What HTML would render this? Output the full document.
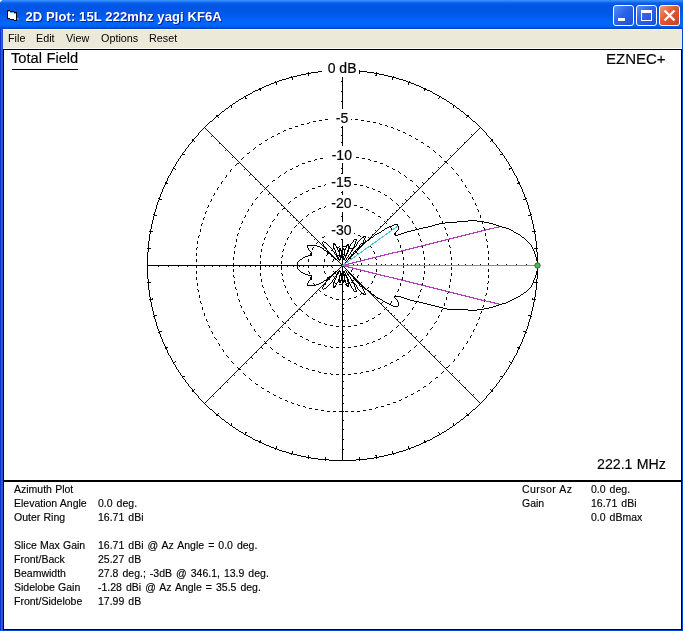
<!DOCTYPE html>
<html><head><meta charset="utf-8">
<style>
*{margin:0;padding:0;box-sizing:border-box}
html,body{width:683px;height:631px;overflow:hidden;background:#0842D6;font-family:"Liberation Sans",sans-serif;-webkit-font-smoothing:antialiased}
#panel,.t,#menu,#title,#plot{will-change:transform}
#title{position:absolute;left:0;top:0;width:683px;height:29px;
background:linear-gradient(to bottom,#3A93FF 0px,#2D86FB 1px,#0A5EEC 3px,#0054E3 6px,#0058E8 14px,#0062F8 20px,#0066FF 25px,#0058EC 27px,#003DBC 29px)}
#ttext{position:absolute;left:25.5px;top:8.5px;letter-spacing:0.1px;color:#fff;font-weight:bold;font-size:13px;line-height:16px;white-space:nowrap;text-shadow:1px 1px 0 #0A1EA0}
.btn{position:absolute;top:5px;width:21px;height:21px;border:1px solid #fff;border-radius:3px;
background:linear-gradient(135deg,#5A8EF5 0%,#2B64E6 45%,#1E51D4 100%)}
#bclose{background:linear-gradient(135deg,#F39A7C 0%,#E3592F 45%,#C8401E 100%)}
#menu{position:absolute;left:3px;top:29px;width:679px;height:20px;background:#ECE9D8;border-top:1px solid #F4F7FB;border-left:1px solid #DCE8F8;border-bottom:1px solid #FAFAF6}
#menu span{position:absolute;top:2px;font-size:10.8px;line-height:13px;color:#000}
#client{position:absolute;left:3px;top:49px;width:679px;height:581px;background:#fff;border:1px solid #000}
#lframe{position:absolute;left:0;top:29px;width:3px;height:602px;background:linear-gradient(to right,#0634CC 0,#0634CC 1px,#2C60E4 1px,#2C60E4 2px,#2452C4 2px)}
.t{position:absolute;font-size:10.5px;line-height:13px;color:#000;white-space:nowrap;word-spacing:0.3px;-webkit-text-stroke:0.15px #000}
.v{word-spacing:1.1px}
</style></head><body>
<div id="title">
  <svg style="position:absolute;left:0;top:0" width="24" height="24" shape-rendering="crispEdges"><rect x="7" y="10" width="1" height="1" fill="#000"/><rect x="8" y="10" width="1" height="1" fill="#000"/><rect x="9" y="10" width="1" height="1" fill="#000"/><rect x="7" y="11" width="1" height="1" fill="#000"/><rect x="8" y="11" width="1" height="1" fill="#55CCE2"/><rect x="9" y="11" width="1" height="1" fill="#55CCE2"/><rect x="10" y="11" width="1" height="1" fill="#000"/><rect x="11" y="11" width="1" height="1" fill="#000"/><rect x="12" y="11" width="1" height="1" fill="#000"/><rect x="13" y="11" width="1" height="1" fill="#000"/><rect x="7" y="12" width="1" height="1" fill="#000"/><rect x="8" y="12" width="1" height="1" fill="#FFFFFF"/><rect x="9" y="12" width="1" height="1" fill="#FFFFFF"/><rect x="10" y="12" width="1" height="1" fill="#55CCE2"/><rect x="11" y="12" width="1" height="1" fill="#55CCE2"/><rect x="12" y="12" width="1" height="1" fill="#55CCE2"/><rect x="13" y="12" width="1" height="1" fill="#55CCE2"/><rect x="14" y="12" width="1" height="1" fill="#000"/><rect x="15" y="12" width="1" height="1" fill="#000"/><rect x="16" y="12" width="1" height="1" fill="#000"/><rect x="7" y="13" width="1" height="1" fill="#000"/><rect x="8" y="13" width="1" height="1" fill="#FFFFFF"/><rect x="9" y="13" width="1" height="1" fill="#FFFFFF"/><rect x="10" y="13" width="1" height="1" fill="#FFFFFF"/><rect x="11" y="13" width="1" height="1" fill="#FFFFFF"/><rect x="12" y="13" width="1" height="1" fill="#FFFFFF"/><rect x="13" y="13" width="1" height="1" fill="#FFFFFF"/><rect x="14" y="13" width="1" height="1" fill="#55CCE2"/><rect x="15" y="13" width="1" height="1" fill="#55CCE2"/><rect x="16" y="13" width="1" height="1" fill="#000"/><rect x="7" y="14" width="1" height="1" fill="#000"/><rect x="8" y="14" width="1" height="1" fill="#FFFFFF"/><rect x="9" y="14" width="1" height="1" fill="#FFFFFF"/><rect x="10" y="14" width="1" height="1" fill="#FFFFFF"/><rect x="11" y="14" width="1" height="1" fill="#FFFFFF"/><rect x="12" y="14" width="1" height="1" fill="#FFFFFF"/><rect x="13" y="14" width="1" height="1" fill="#FFFFFF"/><rect x="14" y="14" width="1" height="1" fill="#FFFFFF"/><rect x="15" y="14" width="1" height="1" fill="#FFFFFF"/><rect x="16" y="14" width="1" height="1" fill="#000"/><rect x="7" y="15" width="1" height="1" fill="#000"/><rect x="8" y="15" width="1" height="1" fill="#FFFFFF"/><rect x="9" y="15" width="1" height="1" fill="#FFFFFF"/><rect x="10" y="15" width="1" height="1" fill="#FFFFFF"/><rect x="11" y="15" width="1" height="1" fill="#FFFFFF"/><rect x="12" y="15" width="1" height="1" fill="#FFFFFF"/><rect x="13" y="15" width="1" height="1" fill="#FFFFFF"/><rect x="14" y="15" width="1" height="1" fill="#FFFFFF"/><rect x="15" y="15" width="1" height="1" fill="#FFFFFF"/><rect x="16" y="15" width="1" height="1" fill="#000"/><rect x="7" y="16" width="1" height="1" fill="#000"/><rect x="8" y="16" width="1" height="1" fill="#FFFFFF"/><rect x="9" y="16" width="1" height="1" fill="#FFFFFF"/><rect x="10" y="16" width="1" height="1" fill="#FFFFFF"/><rect x="11" y="16" width="1" height="1" fill="#FFFFFF"/><rect x="12" y="16" width="1" height="1" fill="#FFFFFF"/><rect x="13" y="16" width="1" height="1" fill="#FFFFFF"/><rect x="14" y="16" width="1" height="1" fill="#FFFFFF"/><rect x="15" y="16" width="1" height="1" fill="#FFFFFF"/><rect x="16" y="16" width="1" height="1" fill="#000"/><rect x="7" y="17" width="1" height="1" fill="#000"/><rect x="8" y="17" width="1" height="1" fill="#FFFFFF"/><rect x="9" y="17" width="1" height="1" fill="#FFFFFF"/><rect x="10" y="17" width="1" height="1" fill="#FFFFFF"/><rect x="11" y="17" width="1" height="1" fill="#FFFFFF"/><rect x="12" y="17" width="1" height="1" fill="#FFFFFF"/><rect x="13" y="17" width="1" height="1" fill="#FFFFFF"/><rect x="14" y="17" width="1" height="1" fill="#FFFFFF"/><rect x="15" y="17" width="1" height="1" fill="#FFFFFF"/><rect x="16" y="17" width="1" height="1" fill="#000"/><rect x="7" y="18" width="1" height="1" fill="#000"/><rect x="8" y="18" width="1" height="1" fill="#000"/><rect x="9" y="18" width="1" height="1" fill="#000"/><rect x="10" y="18" width="1" height="1" fill="#FFFFFF"/><rect x="11" y="18" width="1" height="1" fill="#FFFFFF"/><rect x="12" y="18" width="1" height="1" fill="#FFFFFF"/><rect x="13" y="18" width="1" height="1" fill="#FFFFFF"/><rect x="14" y="18" width="1" height="1" fill="#FFFFFF"/><rect x="15" y="18" width="1" height="1" fill="#FFFFFF"/><rect x="16" y="18" width="1" height="1" fill="#000"/><rect x="10" y="19" width="1" height="1" fill="#000"/><rect x="11" y="19" width="1" height="1" fill="#000"/><rect x="12" y="19" width="1" height="1" fill="#000"/><rect x="13" y="19" width="1" height="1" fill="#000"/><rect x="14" y="19" width="1" height="1" fill="#FFFFFF"/><rect x="15" y="19" width="1" height="1" fill="#FFFFFF"/><rect x="16" y="19" width="1" height="1" fill="#000"/><rect x="14" y="20" width="1" height="1" fill="#000"/><rect x="15" y="20" width="1" height="1" fill="#000"/><rect x="16" y="20" width="1" height="1" fill="#000"/><rect x="17" y="18" width="2" height="2" fill="#8AA6D8" opacity="0.6"/></svg>
  <div style="position:absolute;left:0;top:0;width:2px;height:1px;background:#E6EEFA"></div><div style="position:absolute;left:0;top:1px;width:1px;height:1px;background:#C8D8F4"></div>
  <div id="ttext">2D Plot: 15L 222mhz yagi KF6A</div>
  <div class="btn" style="left:613px"><div style="position:absolute;left:4px;top:12px;width:7px;height:3px;background:#fff"></div></div>
  <div class="btn" style="left:636px"><div style="position:absolute;left:4px;top:4px;width:11px;height:11px;border:1px solid #fff;border-top-width:3px"></div></div>
  <div class="btn" id="bclose" style="left:659px">
    <svg style="position:absolute;left:0;top:0" width="19" height="19" viewBox="0 0 19 19"><path d="M4.5 4.5 L14.5 14.5 M14.5 4.5 L4.5 14.5" stroke="#fff" stroke-width="2.4"/></svg>
  </div>
</div>
<div id="menu">
  <span style="left:4px">File</span>
  <span style="left:32px">Edit</span>
  <span style="left:62px">View</span>
  <span style="left:97px">Options</span>
  <span style="left:145px">Reset</span>
</div>
<div id="lframe"></div>
<div id="client"></div>
<div class="t" style="left:11px;top:50px;font-size:14.7px;line-height:17px">Total Field</div>
<div style="position:absolute;left:12px;top:69px;width:66px;height:1px;background:#000"></div>
<div class="t" style="left:606px;top:50px;font-size:15px;line-height:17px">EZNEC+</div>
<div class="t" style="left:597px;top:456px;font-size:14.2px;line-height:17px">222.1 MHz</div>
<div style="position:absolute;left:4px;top:480px;width:677px;height:2px;background:#000"></div>
<div id="panel">
<div class="t" style="left:14px;top:483px">Azimuth Plot</div>
<div class="t" style="left:14px;top:497px">Elevation Angle</div><div class="t v" style="left:98px;top:497px">0.0 deg.</div>
<div class="t" style="left:14px;top:511px">Outer Ring</div><div class="t v" style="left:98px;top:511px">16.71 dBi</div>
<div class="t" style="left:14px;top:539px">Slice Max Gain</div><div class="t v" style="left:98px;top:539px">16.71 dBi @ Az Angle = 0.0 deg.</div>
<div class="t" style="left:14px;top:553px">Front/Back</div><div class="t v" style="left:98px;top:553px">25.27 dB</div>
<div class="t" style="left:14px;top:567px">Beamwidth</div><div class="t v" style="left:98px;top:567px">27.8 deg.; -3dB @ 346.1, 13.9 deg.</div>
<div class="t" style="left:14px;top:581px">Sidelobe Gain</div><div class="t v" style="left:98px;top:581px">-1.28 dBi @ Az Angle = 35.5 deg.</div>
<div class="t" style="left:14px;top:595px">Front/Sidelobe</div><div class="t v" style="left:98px;top:595px">17.99 dB</div>
<div class="t" style="left:522px;top:483px;letter-spacing:0.45px">Cursor Az</div><div class="t v" style="left:591px;top:483px">0.0 deg.</div>
<div class="t" style="left:522px;top:497px">Gain</div><div class="t v" style="left:591px;top:497px">16.71 dBi</div>
<div class="t v" style="left:591px;top:511px">0.0 dBmax</div>
</div>
<!-- PLOT -->
<svg id="plot" style="position:absolute;left:0;top:0" width="683" height="631" viewBox="0 0 683 631" shape-rendering="crispEdges">
<path d="M329 70h27v1h-27zM318 71h11v1h-11zM356 71h11v1h-11zM311 72h7v1h-7zM367 72h7v1h-7zM306 73h5v1h-5zM374 73h5v1h-5zM301 74h5v1h-5zM379 74h5v1h-5zM297 75h4v1h-4zM384 75h4v1h-4zM293 76h4v1h-4zM388 76h4v1h-4zM289 77h4v1h-4zM392 77h4v1h-4zM286 78h3v1h-3zM396 78h3v1h-3zM282 79h4v1h-4zM399 79h4v1h-4zM279 80h3v1h-3zM403 80h3v1h-3zM277 81h2v1h-2zM406 81h2v1h-2zM274 82h3v1h-3zM408 82h3v1h-3zM271 83h3v1h-3zM411 83h3v1h-3zM269 84h2v1h-2zM414 84h2v1h-2zM266 85h3v1h-3zM416 85h3v1h-3zM264 86h2v1h-2zM419 86h2v1h-2zM262 87h2v1h-2zM421 87h2v1h-2zM260 88h2v1h-2zM423 88h2v1h-2zM258 89h2v1h-2zM425 89h2v1h-2zM255 90h3v1h-3zM427 90h3v1h-3zM253 91h2v1h-2zM430 91h2v1h-2zM252 92h1v1h-1zM432 92h1v1h-1zM250 93h2v1h-2zM433 93h2v1h-2zM248 94h2v1h-2zM435 94h2v1h-2zM246 95h2v1h-2zM437 95h2v1h-2zM244 96h2v1h-2zM439 96h2v1h-2zM243 97h1v1h-1zM441 97h1v1h-1zM241 98h2v1h-2zM442 98h2v1h-2zM239 99h2v1h-2zM444 99h2v1h-2zM238 100h1v1h-1zM446 100h1v1h-1zM236 101h2v1h-2zM447 101h2v1h-2zM235 102h1v1h-1zM449 102h1v1h-1zM233 103h2v1h-2zM450 103h2v1h-2zM232 104h1v1h-1zM452 104h1v1h-1zM230 105h2v1h-2zM453 105h2v1h-2zM229 106h1v1h-1zM455 106h1v1h-1zM228 107h1v1h-1zM456 107h1v1h-1zM226 108h2v1h-2zM457 108h2v1h-2zM225 109h1v1h-1zM459 109h1v1h-1zM224 110h1v1h-1zM460 110h1v1h-1zM222 111h2v1h-2zM461 111h2v1h-2zM221 112h1v1h-1zM463 112h1v1h-1zM220 113h1v1h-1zM464 113h1v1h-1zM219 114h1v1h-1zM465 114h1v1h-1zM217 115h2v1h-2zM466 115h2v1h-2zM216 116h1v1h-1zM468 116h1v1h-1zM215 117h1v1h-1zM469 117h1v1h-1zM214 118h1v1h-1zM470 118h1v1h-1zM213 119h1v1h-1zM471 119h1v1h-1zM212 120h1v1h-1zM472 120h1v1h-1zM210 121h2v1h-2zM473 121h2v1h-2zM209 122h1v1h-1zM475 122h1v1h-1zM208 123h1v1h-1zM476 123h1v1h-1zM207 124h1v1h-1zM477 124h1v1h-1zM206 125h1v1h-1zM478 125h1v1h-1zM205 126h1v1h-1zM479 126h1v1h-1zM204 127h1v1h-1zM480 127h1v1h-1zM203 128h1v1h-1zM481 128h1v1h-1zM202 129h1v1h-1zM482 129h1v1h-1zM201 130h1v1h-1zM483 130h1v1h-1zM200 131h1v1h-1zM484 131h1v1h-1zM199 132h1v1h-1zM485 132h1v1h-1zM198 133h1v1h-1zM486 133h1v1h-1zM198 134h1v1h-1zM486 134h1v1h-1zM197 135h1v1h-1zM487 135h1v1h-1zM196 136h1v1h-1zM488 136h1v1h-1zM195 137h1v1h-1zM489 137h1v1h-1zM194 138h1v1h-1zM490 138h1v1h-1zM193 139h1v1h-1zM491 139h1v1h-1zM192 140h1v1h-1zM492 140h1v1h-1zM192 141h1v1h-1zM492 141h1v1h-1zM191 142h1v1h-1zM493 142h1v1h-1zM190 143h1v1h-1zM494 143h1v1h-1zM189 144h1v1h-1zM495 144h1v1h-1zM188 145h1v1h-1zM496 145h1v1h-1zM188 146h1v1h-1zM496 146h1v1h-1zM187 147h1v1h-1zM497 147h1v1h-1zM186 148h1v1h-1zM498 148h1v1h-1zM185 149h1v1h-1zM499 149h1v1h-1zM185 150h1v1h-1zM499 150h1v1h-1zM184 151h1v1h-1zM500 151h1v1h-1zM183 152h1v1h-1zM501 152h1v1h-1zM182 153h1v1h-1zM502 153h1v1h-1zM182 154h1v1h-1zM502 154h1v1h-1zM181 155h1v1h-1zM503 155h1v1h-1zM180 156h1v1h-1zM504 156h1v1h-1zM180 157h1v1h-1zM504 157h1v1h-1zM179 158h1v1h-1zM505 158h1v1h-1zM178 159h1v1h-1zM506 159h1v1h-1zM178 160h1v1h-1zM506 160h1v1h-1zM177 161h1v1h-1zM507 161h1v1h-1zM176 162h1v1h-1zM508 162h1v1h-1zM176 163h1v1h-1zM508 163h1v1h-1zM175 164h1v1h-1zM509 164h1v1h-1zM175 165h1v1h-1zM509 165h1v1h-1zM174 166h1v1h-1zM510 166h1v1h-1zM173 167h1v1h-1zM511 167h1v1h-1zM173 168h1v1h-1zM511 168h1v1h-1zM172 169h1v1h-1zM512 169h1v1h-1zM172 170h1v1h-1zM512 170h1v1h-1zM171 171h1v1h-1zM513 171h1v1h-1zM171 172h1v1h-1zM513 172h1v1h-1zM170 173h1v1h-1zM514 173h1v1h-1zM170 174h1v1h-1zM514 174h1v1h-1zM169 175h1v1h-1zM515 175h1v1h-1zM168 176h1v1h-1zM516 176h1v1h-1zM168 177h1v1h-1zM516 177h1v1h-1zM167 178h1v1h-1zM517 178h1v1h-1zM167 179h1v1h-1zM517 179h1v1h-1zM167 180h1v1h-1zM517 180h1v1h-1zM166 181h1v1h-1zM518 181h1v1h-1zM166 182h1v1h-1zM518 182h1v1h-1zM165 183h1v1h-1zM519 183h1v1h-1zM165 184h1v1h-1zM519 184h1v1h-1zM164 185h1v1h-1zM520 185h1v1h-1zM164 186h1v1h-1zM520 186h1v1h-1zM163 187h1v1h-1zM521 187h1v1h-1zM163 188h1v1h-1zM521 188h1v1h-1zM162 189h1v1h-1zM522 189h1v1h-1zM162 190h1v1h-1zM522 190h1v1h-1zM162 191h1v1h-1zM522 191h1v1h-1zM161 192h1v1h-1zM523 192h1v1h-1zM161 193h1v1h-1zM523 193h1v1h-1zM160 194h1v1h-1zM524 194h1v1h-1zM160 195h1v1h-1zM524 195h1v1h-1zM160 196h1v1h-1zM524 196h1v1h-1zM159 197h1v1h-1zM525 197h1v1h-1zM159 198h1v1h-1zM525 198h1v1h-1zM159 199h1v1h-1zM525 199h1v1h-1zM158 200h1v1h-1zM526 200h1v1h-1zM158 201h1v1h-1zM526 201h1v1h-1zM157 202h1v1h-1zM527 202h1v1h-1zM157 203h1v1h-1zM527 203h1v1h-1zM157 204h1v1h-1zM527 204h1v1h-1zM156 205h1v1h-1zM528 205h1v1h-1zM156 206h1v1h-1zM528 206h1v1h-1zM156 207h1v1h-1zM528 207h1v1h-1zM156 208h1v1h-1zM528 208h1v1h-1zM155 209h1v1h-1zM529 209h1v1h-1zM155 210h1v1h-1zM529 210h1v1h-1zM155 211h1v1h-1zM529 211h1v1h-1zM154 212h1v1h-1zM530 212h1v1h-1zM154 213h1v1h-1zM530 213h1v1h-1zM154 214h1v1h-1zM530 214h1v1h-1zM154 215h1v1h-1zM530 215h1v1h-1zM153 216h1v1h-1zM531 216h1v1h-1zM153 217h1v1h-1zM531 217h1v1h-1zM153 218h1v1h-1zM531 218h1v1h-1zM153 219h1v1h-1zM531 219h1v1h-1zM152 220h1v1h-1zM532 220h1v1h-1zM152 221h1v1h-1zM532 221h1v1h-1zM152 222h1v1h-1zM532 222h1v1h-1zM152 223h1v1h-1zM532 223h1v1h-1zM151 224h1v1h-1zM533 224h1v1h-1zM151 225h1v1h-1zM533 225h1v1h-1zM151 226h1v1h-1zM533 226h1v1h-1zM151 227h1v1h-1zM533 227h1v1h-1zM151 228h1v1h-1zM533 228h1v1h-1zM150 229h1v1h-1zM534 229h1v1h-1zM150 230h1v1h-1zM534 230h1v1h-1zM150 231h1v1h-1zM534 231h1v1h-1zM150 232h1v1h-1zM534 232h1v1h-1zM150 233h1v1h-1zM534 233h1v1h-1zM149 234h1v1h-1zM535 234h1v1h-1zM149 235h1v1h-1zM535 235h1v1h-1zM149 236h1v1h-1zM535 236h1v1h-1zM149 237h1v1h-1zM535 237h1v1h-1zM149 238h1v1h-1zM535 238h1v1h-1zM149 239h1v1h-1zM535 239h1v1h-1zM149 240h1v1h-1zM535 240h1v1h-1zM148 241h1v1h-1zM536 241h1v1h-1zM148 242h1v1h-1zM536 242h1v1h-1zM148 243h1v1h-1zM536 243h1v1h-1zM148 244h1v1h-1zM536 244h1v1h-1zM148 245h1v1h-1zM536 245h1v1h-1zM148 246h1v1h-1zM536 246h1v1h-1zM148 247h1v1h-1zM536 247h1v1h-1zM148 248h1v1h-1zM536 248h1v1h-1zM148 249h1v1h-1zM536 249h1v1h-1zM148 250h1v1h-1zM536 250h1v1h-1zM148 251h1v1h-1zM536 251h1v1h-1zM147 252h1v1h-1zM537 252h1v1h-1zM147 253h1v1h-1zM537 253h1v1h-1zM147 254h1v1h-1zM537 254h1v1h-1zM147 255h1v1h-1zM537 255h1v1h-1zM147 256h1v1h-1zM537 256h1v1h-1zM147 257h1v1h-1zM537 257h1v1h-1zM147 258h1v1h-1zM537 258h1v1h-1zM147 259h1v1h-1zM537 259h1v1h-1zM147 260h1v1h-1zM537 260h1v1h-1zM147 261h1v1h-1zM537 261h1v1h-1zM147 262h1v1h-1zM537 262h1v1h-1zM147 263h1v1h-1zM537 263h1v1h-1zM147 264h1v1h-1zM537 264h1v1h-1zM147 265h1v1h-1zM537 265h1v1h-1zM147 266h1v1h-1zM537 266h1v1h-1zM147 267h1v1h-1zM537 267h1v1h-1zM147 268h1v1h-1zM537 268h1v1h-1zM147 269h1v1h-1zM537 269h1v1h-1zM147 270h1v1h-1zM537 270h1v1h-1zM147 271h1v1h-1zM537 271h1v1h-1zM147 272h1v1h-1zM537 272h1v1h-1zM147 273h1v1h-1zM537 273h1v1h-1zM147 274h1v1h-1zM537 274h1v1h-1zM147 275h1v1h-1zM537 275h1v1h-1zM147 276h1v1h-1zM537 276h1v1h-1zM147 277h1v1h-1zM537 277h1v1h-1zM147 278h1v1h-1zM537 278h1v1h-1zM148 279h1v1h-1zM536 279h1v1h-1zM148 280h1v1h-1zM536 280h1v1h-1zM148 281h1v1h-1zM536 281h1v1h-1zM148 282h1v1h-1zM536 282h1v1h-1zM148 283h1v1h-1zM536 283h1v1h-1zM148 284h1v1h-1zM536 284h1v1h-1zM148 285h1v1h-1zM536 285h1v1h-1zM148 286h1v1h-1zM536 286h1v1h-1zM148 287h1v1h-1zM536 287h1v1h-1zM148 288h1v1h-1zM536 288h1v1h-1zM148 289h1v1h-1zM536 289h1v1h-1zM149 290h1v1h-1zM535 290h1v1h-1zM149 291h1v1h-1zM535 291h1v1h-1zM149 292h1v1h-1zM535 292h1v1h-1zM149 293h1v1h-1zM535 293h1v1h-1zM149 294h1v1h-1zM535 294h1v1h-1zM149 295h1v1h-1zM535 295h1v1h-1zM149 296h1v1h-1zM535 296h1v1h-1zM150 297h1v1h-1zM534 297h1v1h-1zM150 298h1v1h-1zM534 298h1v1h-1zM150 299h1v1h-1zM534 299h1v1h-1zM150 300h1v1h-1zM534 300h1v1h-1zM150 301h1v1h-1zM534 301h1v1h-1zM151 302h1v1h-1zM533 302h1v1h-1zM151 303h1v1h-1zM533 303h1v1h-1zM151 304h1v1h-1zM533 304h1v1h-1zM151 305h1v1h-1zM533 305h1v1h-1zM151 306h1v1h-1zM533 306h1v1h-1zM152 307h1v1h-1zM532 307h1v1h-1zM152 308h1v1h-1zM532 308h1v1h-1zM152 309h1v1h-1zM532 309h1v1h-1zM152 310h1v1h-1zM532 310h1v1h-1zM153 311h1v1h-1zM531 311h1v1h-1zM153 312h1v1h-1zM531 312h1v1h-1zM153 313h1v1h-1zM531 313h1v1h-1zM153 314h1v1h-1zM531 314h1v1h-1zM154 315h1v1h-1zM530 315h1v1h-1zM154 316h1v1h-1zM530 316h1v1h-1zM154 317h1v1h-1zM530 317h1v1h-1zM154 318h1v1h-1zM530 318h1v1h-1zM155 319h1v1h-1zM529 319h1v1h-1zM155 320h1v1h-1zM529 320h1v1h-1zM155 321h1v1h-1zM529 321h1v1h-1zM156 322h1v1h-1zM528 322h1v1h-1zM156 323h1v1h-1zM528 323h1v1h-1zM156 324h1v1h-1zM528 324h1v1h-1zM156 325h1v1h-1zM528 325h1v1h-1zM157 326h1v1h-1zM527 326h1v1h-1zM157 327h1v1h-1zM527 327h1v1h-1zM157 328h1v1h-1zM527 328h1v1h-1zM158 329h1v1h-1zM526 329h1v1h-1zM158 330h1v1h-1zM526 330h1v1h-1zM159 331h1v1h-1zM525 331h1v1h-1zM159 332h1v1h-1zM525 332h1v1h-1zM159 333h1v1h-1zM525 333h1v1h-1zM160 334h1v1h-1zM524 334h1v1h-1zM160 335h1v1h-1zM524 335h1v1h-1zM160 336h1v1h-1zM524 336h1v1h-1zM161 337h1v1h-1zM523 337h1v1h-1zM161 338h1v1h-1zM523 338h1v1h-1zM162 339h1v1h-1zM522 339h1v1h-1zM162 340h1v1h-1zM522 340h1v1h-1zM162 341h1v1h-1zM522 341h1v1h-1zM163 342h1v1h-1zM521 342h1v1h-1zM163 343h1v1h-1zM521 343h1v1h-1zM164 344h1v1h-1zM520 344h1v1h-1zM164 345h1v1h-1zM520 345h1v1h-1zM165 346h1v1h-1zM519 346h1v1h-1zM165 347h1v1h-1zM519 347h1v1h-1zM166 348h1v1h-1zM518 348h1v1h-1zM166 349h1v1h-1zM518 349h1v1h-1zM167 350h1v1h-1zM517 350h1v1h-1zM167 351h1v1h-1zM517 351h1v1h-1zM167 352h1v1h-1zM517 352h1v1h-1zM168 353h1v1h-1zM516 353h1v1h-1zM168 354h1v1h-1zM516 354h1v1h-1zM169 355h1v1h-1zM515 355h1v1h-1zM170 356h1v1h-1zM514 356h1v1h-1zM170 357h1v1h-1zM514 357h1v1h-1zM171 358h1v1h-1zM513 358h1v1h-1zM171 359h1v1h-1zM513 359h1v1h-1zM172 360h1v1h-1zM512 360h1v1h-1zM172 361h1v1h-1zM512 361h1v1h-1zM173 362h1v1h-1zM511 362h1v1h-1zM173 363h1v1h-1zM511 363h1v1h-1zM174 364h1v1h-1zM510 364h1v1h-1zM175 365h1v1h-1zM509 365h1v1h-1zM175 366h1v1h-1zM509 366h1v1h-1zM176 367h1v1h-1zM508 367h1v1h-1zM176 368h1v1h-1zM508 368h1v1h-1zM177 369h1v1h-1zM507 369h1v1h-1zM178 370h1v1h-1zM506 370h1v1h-1zM178 371h1v1h-1zM506 371h1v1h-1zM179 372h1v1h-1zM505 372h1v1h-1zM180 373h1v1h-1zM504 373h1v1h-1zM180 374h1v1h-1zM504 374h1v1h-1zM181 375h1v1h-1zM503 375h1v1h-1zM182 376h1v1h-1zM502 376h1v1h-1zM182 377h1v1h-1zM502 377h1v1h-1zM183 378h1v1h-1zM501 378h1v1h-1zM184 379h1v1h-1zM500 379h1v1h-1zM185 380h1v1h-1zM499 380h1v1h-1zM185 381h1v1h-1zM499 381h1v1h-1zM186 382h1v1h-1zM498 382h1v1h-1zM187 383h1v1h-1zM497 383h1v1h-1zM188 384h1v1h-1zM496 384h1v1h-1zM188 385h1v1h-1zM496 385h1v1h-1zM189 386h1v1h-1zM495 386h1v1h-1zM190 387h1v1h-1zM494 387h1v1h-1zM191 388h1v1h-1zM493 388h1v1h-1zM192 389h1v1h-1zM492 389h1v1h-1zM192 390h1v1h-1zM492 390h1v1h-1zM193 391h1v1h-1zM491 391h1v1h-1zM194 392h1v1h-1zM490 392h1v1h-1zM195 393h1v1h-1zM489 393h1v1h-1zM196 394h1v1h-1zM488 394h1v1h-1zM197 395h1v1h-1zM487 395h1v1h-1zM198 396h1v1h-1zM486 396h1v1h-1zM198 397h1v1h-1zM486 397h1v1h-1zM199 398h1v1h-1zM485 398h1v1h-1zM200 399h1v1h-1zM484 399h1v1h-1zM201 400h1v1h-1zM483 400h1v1h-1zM202 401h1v1h-1zM482 401h1v1h-1zM203 402h1v1h-1zM481 402h1v1h-1zM204 403h1v1h-1zM480 403h1v1h-1zM205 404h1v1h-1zM479 404h1v1h-1zM206 405h1v1h-1zM478 405h1v1h-1zM207 406h1v1h-1zM477 406h1v1h-1zM208 407h1v1h-1zM476 407h1v1h-1zM209 408h1v1h-1zM475 408h1v1h-1zM210 409h2v1h-2zM473 409h2v1h-2zM212 410h1v1h-1zM472 410h1v1h-1zM213 411h1v1h-1zM471 411h1v1h-1zM214 412h1v1h-1zM470 412h1v1h-1zM215 413h1v1h-1zM469 413h1v1h-1zM216 414h1v1h-1zM468 414h1v1h-1zM217 415h2v1h-2zM466 415h2v1h-2zM219 416h1v1h-1zM465 416h1v1h-1zM220 417h1v1h-1zM464 417h1v1h-1zM221 418h1v1h-1zM463 418h1v1h-1zM222 419h2v1h-2zM461 419h2v1h-2zM224 420h1v1h-1zM460 420h1v1h-1zM225 421h1v1h-1zM459 421h1v1h-1zM226 422h2v1h-2zM457 422h2v1h-2zM228 423h1v1h-1zM456 423h1v1h-1zM229 424h1v1h-1zM455 424h1v1h-1zM230 425h2v1h-2zM453 425h2v1h-2zM232 426h1v1h-1zM452 426h1v1h-1zM233 427h2v1h-2zM450 427h2v1h-2zM235 428h1v1h-1zM449 428h1v1h-1zM236 429h2v1h-2zM447 429h2v1h-2zM238 430h1v1h-1zM446 430h1v1h-1zM239 431h2v1h-2zM444 431h2v1h-2zM241 432h2v1h-2zM442 432h2v1h-2zM243 433h1v1h-1zM441 433h1v1h-1zM244 434h2v1h-2zM439 434h2v1h-2zM246 435h2v1h-2zM437 435h2v1h-2zM248 436h2v1h-2zM435 436h2v1h-2zM250 437h2v1h-2zM433 437h2v1h-2zM252 438h1v1h-1zM432 438h1v1h-1zM253 439h2v1h-2zM430 439h2v1h-2zM255 440h3v1h-3zM427 440h3v1h-3zM258 441h2v1h-2zM425 441h2v1h-2zM260 442h2v1h-2zM423 442h2v1h-2zM262 443h2v1h-2zM421 443h2v1h-2zM264 444h2v1h-2zM419 444h2v1h-2zM266 445h3v1h-3zM416 445h3v1h-3zM269 446h2v1h-2zM414 446h2v1h-2zM271 447h3v1h-3zM411 447h3v1h-3zM274 448h3v1h-3zM408 448h3v1h-3zM277 449h2v1h-2zM406 449h2v1h-2zM279 450h3v1h-3zM403 450h3v1h-3zM282 451h4v1h-4zM399 451h4v1h-4zM286 452h3v1h-3zM396 452h3v1h-3zM289 453h4v1h-4zM392 453h4v1h-4zM293 454h4v1h-4zM388 454h4v1h-4zM297 455h4v1h-4zM384 455h4v1h-4zM301 456h5v1h-5zM379 456h5v1h-5zM306 457h5v1h-5zM374 457h5v1h-5zM311 458h7v1h-7zM367 458h7v1h-7zM318 459h11v1h-11zM356 459h11v1h-11zM329 460h27v1h-27z" fill="#000"/>
<path d="M488 265h1v1h-1zM488 264h1v1h-1zM488 263h1v1h-1zM488 259h1v1h-1zM488 258h1v1h-1zM488 257h1v1h-1zM488 253h1v1h-1zM488 252h1v1h-1zM488 251h1v1h-1zM487 247h1v1h-1zM487 246h1v1h-1zM487 245h1v1h-1zM487 241h1v1h-1zM486 240h1v1h-1zM486 239h1v1h-1zM485 235h1v1h-1zM485 234h1v1h-1zM485 233h1v1h-1zM484 229h1v1h-1zM484 228h1v1h-1zM483 227h1v1h-1zM482 223h1v1h-1zM482 222h1v1h-1zM482 221h1v1h-1zM480 217h1v1h-1zM480 216h1v1h-1zM480 215h1v1h-1zM478 211h1v1h-1zM478 210h1v1h-1zM477 209h1v1h-1zM476 205h1v1h-1zM475 204h1v1h-1zM475 203h1v1h-1zM473 199h1v1h-1zM472 198h1v1h-1zM472 197h1v1h-1zM470 193h1v1h-1zM469 192h1v1h-1zM468 191h1v1h-1zM466 187h1v1h-1zM465 186h1v1h-1zM465 185h1v1h-1zM462 181h1v1h-1zM461 180h1v1h-1zM461 179h1v1h-1zM458 175h1v1h-1zM457 174h1v1h-1zM456 173h1v1h-1zM453 169h1v1h-1zM452 168h1v1h-1zM451 167h1v1h-1zM447 163h1v1h-1zM446 162h1v1h-1zM445 161h1v1h-1zM441 157h1v1h-1zM440 156h1v1h-1zM439 155h1v1h-1zM435 152h1v1h-1zM434 151h1v1h-1zM433 150h1v1h-1zM429 147h1v1h-1zM428 146h1v1h-1zM427 146h1v1h-1zM423 143h1v1h-1zM422 142h1v1h-1zM421 142h1v1h-1zM417 139h1v1h-1zM416 139h1v1h-1zM415 138h1v1h-1zM411 136h1v1h-1zM410 135h1v1h-1zM409 135h1v1h-1zM405 133h1v1h-1zM404 132h1v1h-1zM403 132h1v1h-1zM399 130h1v1h-1zM398 130h1v1h-1zM397 129h1v1h-1zM393 128h1v1h-1zM392 127h1v1h-1zM391 127h1v1h-1zM387 126h1v1h-1zM386 125h1v1h-1zM385 125h1v1h-1zM381 124h1v1h-1zM380 124h1v1h-1zM379 123h1v1h-1zM375 122h1v1h-1zM374 122h1v1h-1zM373 122h1v1h-1zM369 121h1v1h-1zM368 121h1v1h-1zM367 121h1v1h-1zM363 120h1v1h-1zM362 120h1v1h-1zM361 120h1v1h-1zM357 119h1v1h-1zM356 119h1v1h-1zM355 119h1v1h-1zM351 119h1v1h-1zM350 119h1v1h-1zM349 119h1v1h-1zM345 119h1v1h-1zM344 119h1v1h-1zM343 119h1v1h-1zM339 119h1v1h-1zM338 119h1v1h-1zM337 119h1v1h-1zM333 119h1v1h-1zM332 119h1v1h-1zM331 119h1v1h-1zM327 119h1v1h-1zM326 119h1v1h-1zM325 119h1v1h-1zM321 120h1v1h-1zM320 120h1v1h-1zM319 120h1v1h-1zM315 121h1v1h-1zM314 121h1v1h-1zM313 121h1v1h-1zM309 122h1v1h-1zM308 123h1v1h-1zM307 123h1v1h-1zM303 124h1v1h-1zM302 124h1v1h-1zM301 124h1v1h-1zM297 126h1v1h-1zM296 126h1v1h-1zM295 126h1v1h-1zM291 128h1v1h-1zM290 128h1v1h-1zM289 128h1v1h-1zM285 130h1v1h-1zM284 130h1v1h-1zM283 131h1v1h-1zM279 133h1v1h-1zM278 133h1v1h-1zM277 134h1v1h-1zM273 136h1v1h-1zM272 136h1v1h-1zM271 137h1v1h-1zM267 139h1v1h-1zM266 140h1v1h-1zM265 140h1v1h-1zM261 143h1v1h-1zM260 144h1v1h-1zM259 144h1v1h-1zM255 147h1v1h-1zM254 148h1v1h-1zM253 149h1v1h-1zM249 152h1v1h-1zM248 153h1v1h-1zM247 153h1v1h-1zM243 157h1v1h-1zM242 158h1v1h-1zM241 159h1v1h-1zM237 163h1v1h-1zM236 164h1v1h-1zM235 165h1v1h-1zM231 169h1v1h-1zM230 170h1v1h-1zM230 171h1v1h-1zM226 175h1v1h-1zM226 176h1v1h-1zM225 177h1v1h-1zM222 181h1v1h-1zM221 182h1v1h-1zM221 183h1v1h-1zM218 187h1v1h-1zM217 188h1v1h-1zM217 189h1v1h-1zM214 193h1v1h-1zM214 194h1v1h-1zM213 195h1v1h-1zM211 199h1v1h-1zM211 200h1v1h-1zM210 201h1v1h-1zM208 205h1v1h-1zM208 206h1v1h-1zM207 207h1v1h-1zM206 211h1v1h-1zM205 212h1v1h-1zM205 213h1v1h-1zM204 217h1v1h-1zM203 218h1v1h-1zM203 219h1v1h-1zM202 223h1v1h-1zM201 224h1v1h-1zM201 225h1v1h-1zM200 229h1v1h-1zM200 230h1v1h-1zM200 231h1v1h-1zM199 235h1v1h-1zM198 236h1v1h-1zM198 237h1v1h-1zM197 241h1v1h-1zM197 242h1v1h-1zM197 243h1v1h-1zM197 247h1v1h-1zM196 248h1v1h-1zM196 249h1v1h-1zM196 253h1v1h-1zM196 254h1v1h-1zM196 255h1v1h-1zM196 259h1v1h-1zM196 260h1v1h-1zM196 261h1v1h-1zM196 265h1v1h-1zM196 266h1v1h-1zM196 267h1v1h-1zM196 271h1v1h-1zM196 272h1v1h-1zM196 273h1v1h-1zM196 277h1v1h-1zM196 278h1v1h-1zM196 279h1v1h-1zM197 283h1v1h-1zM197 284h1v1h-1zM197 285h1v1h-1zM197 289h1v1h-1zM198 290h1v1h-1zM198 291h1v1h-1zM199 295h1v1h-1zM199 296h1v1h-1zM199 297h1v1h-1zM200 301h1v1h-1zM200 302h1v1h-1zM201 303h1v1h-1zM202 307h1v1h-1zM202 308h1v1h-1zM202 309h1v1h-1zM204 313h1v1h-1zM204 314h1v1h-1zM204 315h1v1h-1zM206 319h1v1h-1zM206 320h1v1h-1zM207 321h1v1h-1zM208 325h1v1h-1zM209 326h1v1h-1zM209 327h1v1h-1zM211 331h1v1h-1zM212 332h1v1h-1zM212 333h1v1h-1zM214 337h1v1h-1zM215 338h1v1h-1zM216 339h1v1h-1zM218 343h1v1h-1zM219 344h1v1h-1zM219 345h1v1h-1zM222 349h1v1h-1zM223 350h1v1h-1zM223 351h1v1h-1zM226 355h1v1h-1zM227 356h1v1h-1zM228 357h1v1h-1zM231 361h1v1h-1zM232 362h1v1h-1zM233 363h1v1h-1zM237 367h1v1h-1zM238 368h1v1h-1zM239 369h1v1h-1zM243 373h1v1h-1zM244 374h1v1h-1zM245 375h1v1h-1zM249 378h1v1h-1zM250 379h1v1h-1zM251 380h1v1h-1zM255 383h1v1h-1zM256 384h1v1h-1zM257 384h1v1h-1zM261 387h1v1h-1zM262 388h1v1h-1zM263 388h1v1h-1zM267 391h1v1h-1zM268 391h1v1h-1zM269 392h1v1h-1zM273 394h1v1h-1zM274 395h1v1h-1zM275 395h1v1h-1zM279 397h1v1h-1zM280 398h1v1h-1zM281 398h1v1h-1zM285 400h1v1h-1zM286 400h1v1h-1zM287 401h1v1h-1zM291 402h1v1h-1zM292 403h1v1h-1zM293 403h1v1h-1zM297 404h1v1h-1zM298 405h1v1h-1zM299 405h1v1h-1zM303 406h1v1h-1zM304 406h1v1h-1zM305 407h1v1h-1zM309 408h1v1h-1zM310 408h1v1h-1zM311 408h1v1h-1zM315 409h1v1h-1zM316 409h1v1h-1zM317 409h1v1h-1zM321 410h1v1h-1zM322 410h1v1h-1zM323 410h1v1h-1zM327 411h1v1h-1zM328 411h1v1h-1zM329 411h1v1h-1zM333 411h1v1h-1zM334 411h1v1h-1zM335 411h1v1h-1zM339 411h1v1h-1zM340 411h1v1h-1zM341 411h1v1h-1zM345 411h1v1h-1zM346 411h1v1h-1zM347 411h1v1h-1zM351 411h1v1h-1zM352 411h1v1h-1zM353 411h1v1h-1zM357 411h1v1h-1zM358 411h1v1h-1zM359 411h1v1h-1zM363 410h1v1h-1zM364 410h1v1h-1zM365 410h1v1h-1zM369 409h1v1h-1zM370 409h1v1h-1zM371 409h1v1h-1zM375 408h1v1h-1zM376 407h1v1h-1zM377 407h1v1h-1zM381 406h1v1h-1zM382 406h1v1h-1zM383 406h1v1h-1zM387 404h1v1h-1zM388 404h1v1h-1zM389 404h1v1h-1zM393 402h1v1h-1zM394 402h1v1h-1zM395 402h1v1h-1zM399 400h1v1h-1zM400 400h1v1h-1zM401 399h1v1h-1zM405 397h1v1h-1zM406 397h1v1h-1zM407 396h1v1h-1zM411 394h1v1h-1zM412 394h1v1h-1zM413 393h1v1h-1zM417 391h1v1h-1zM418 390h1v1h-1zM419 390h1v1h-1zM423 387h1v1h-1zM424 386h1v1h-1zM425 386h1v1h-1zM429 383h1v1h-1zM430 382h1v1h-1zM431 381h1v1h-1zM435 378h1v1h-1zM436 377h1v1h-1zM437 377h1v1h-1zM441 373h1v1h-1zM442 372h1v1h-1zM443 371h1v1h-1zM447 367h1v1h-1zM448 366h1v1h-1zM449 365h1v1h-1zM453 361h1v1h-1zM454 360h1v1h-1zM454 359h1v1h-1zM458 355h1v1h-1zM458 354h1v1h-1zM459 353h1v1h-1zM462 349h1v1h-1zM463 348h1v1h-1zM463 347h1v1h-1zM466 343h1v1h-1zM467 342h1v1h-1zM467 341h1v1h-1zM470 337h1v1h-1zM470 336h1v1h-1zM471 335h1v1h-1zM473 331h1v1h-1zM473 330h1v1h-1zM474 329h1v1h-1zM476 325h1v1h-1zM476 324h1v1h-1zM477 323h1v1h-1zM478 319h1v1h-1zM479 318h1v1h-1zM479 317h1v1h-1zM480 313h1v1h-1zM481 312h1v1h-1zM481 311h1v1h-1zM482 307h1v1h-1zM483 306h1v1h-1zM483 305h1v1h-1zM484 301h1v1h-1zM484 300h1v1h-1zM484 299h1v1h-1zM485 295h1v1h-1zM486 294h1v1h-1zM486 293h1v1h-1zM487 289h1v1h-1zM487 288h1v1h-1zM487 287h1v1h-1zM487 283h1v1h-1zM488 282h1v1h-1zM488 281h1v1h-1zM488 277h1v1h-1zM488 276h1v1h-1zM488 275h1v1h-1zM488 271h1v1h-1zM488 270h1v1h-1zM488 269h1v1h-1zM451 265h1v1h-1zM451 264h1v1h-1zM451 263h1v1h-1zM451 259h1v1h-1zM451 258h1v1h-1zM451 257h1v1h-1zM450 253h1v1h-1zM450 252h1v1h-1zM450 251h1v1h-1zM450 247h1v1h-1zM449 246h1v1h-1zM449 245h1v1h-1zM448 241h1v1h-1zM448 240h1v1h-1zM448 239h1v1h-1zM447 235h1v1h-1zM447 234h1v1h-1zM446 233h1v1h-1zM445 229h1v1h-1zM445 228h1v1h-1zM444 227h1v1h-1zM443 223h1v1h-1zM442 222h1v1h-1zM442 221h1v1h-1zM440 217h1v1h-1zM439 216h1v1h-1zM439 215h1v1h-1zM437 211h1v1h-1zM436 210h1v1h-1zM436 209h1v1h-1zM433 205h1v1h-1zM432 204h1v1h-1zM432 203h1v1h-1zM429 199h1v1h-1zM428 198h1v1h-1zM427 197h1v1h-1zM424 193h1v1h-1zM423 192h1v1h-1zM422 191h1v1h-1zM418 187h1v1h-1zM417 186h1v1h-1zM416 185h1v1h-1zM412 181h1v1h-1zM411 180h1v1h-1zM410 180h1v1h-1zM406 177h1v1h-1zM405 176h1v1h-1zM404 175h1v1h-1zM400 173h1v1h-1zM399 172h1v1h-1zM398 171h1v1h-1zM394 169h1v1h-1zM393 169h1v1h-1zM392 168h1v1h-1zM388 166h1v1h-1zM387 166h1v1h-1zM386 165h1v1h-1zM382 163h1v1h-1zM381 163h1v1h-1zM380 163h1v1h-1zM376 161h1v1h-1zM375 161h1v1h-1zM374 161h1v1h-1zM370 160h1v1h-1zM369 159h1v1h-1zM368 159h1v1h-1zM364 158h1v1h-1zM363 158h1v1h-1zM362 158h1v1h-1zM358 157h1v1h-1zM357 157h1v1h-1zM356 157h1v1h-1zM352 156h1v1h-1zM351 156h1v1h-1zM350 156h1v1h-1zM346 156h1v1h-1zM345 156h1v1h-1zM344 156h1v1h-1zM340 156h1v1h-1zM339 156h1v1h-1zM338 156h1v1h-1zM334 156h1v1h-1zM333 156h1v1h-1zM332 156h1v1h-1zM328 157h1v1h-1zM327 157h1v1h-1zM326 157h1v1h-1zM322 158h1v1h-1zM321 158h1v1h-1zM320 158h1v1h-1zM316 159h1v1h-1zM315 159h1v1h-1zM314 160h1v1h-1zM310 161h1v1h-1zM309 161h1v1h-1zM308 161h1v1h-1zM304 163h1v1h-1zM303 163h1v1h-1zM302 163h1v1h-1zM298 165h1v1h-1zM297 166h1v1h-1zM296 166h1v1h-1zM292 168h1v1h-1zM291 169h1v1h-1zM290 169h1v1h-1zM286 171h1v1h-1zM285 172h1v1h-1zM284 173h1v1h-1zM280 175h1v1h-1zM279 176h1v1h-1zM278 177h1v1h-1zM274 180h1v1h-1zM273 180h1v1h-1zM272 181h1v1h-1zM268 185h1v1h-1zM267 186h1v1h-1zM266 187h1v1h-1zM262 191h1v1h-1zM261 192h1v1h-1zM260 193h1v1h-1zM257 197h1v1h-1zM256 198h1v1h-1zM255 199h1v1h-1zM252 203h1v1h-1zM252 204h1v1h-1zM251 205h1v1h-1zM248 209h1v1h-1zM248 210h1v1h-1zM247 211h1v1h-1zM245 215h1v1h-1zM245 216h1v1h-1zM244 217h1v1h-1zM242 221h1v1h-1zM242 222h1v1h-1zM241 223h1v1h-1zM240 227h1v1h-1zM239 228h1v1h-1zM239 229h1v1h-1zM238 233h1v1h-1zM237 234h1v1h-1zM237 235h1v1h-1zM236 239h1v1h-1zM236 240h1v1h-1zM236 241h1v1h-1zM235 245h1v1h-1zM235 246h1v1h-1zM234 247h1v1h-1zM234 251h1v1h-1zM234 252h1v1h-1zM234 253h1v1h-1zM233 257h1v1h-1zM233 258h1v1h-1zM233 259h1v1h-1zM233 263h1v1h-1zM233 264h1v1h-1zM233 265h1v1h-1zM233 269h1v1h-1zM233 270h1v1h-1zM233 271h1v1h-1zM233 275h1v1h-1zM233 276h1v1h-1zM234 277h1v1h-1zM234 281h1v1h-1zM234 282h1v1h-1zM234 283h1v1h-1zM235 287h1v1h-1zM235 288h1v1h-1zM236 289h1v1h-1zM237 293h1v1h-1zM237 294h1v1h-1zM237 295h1v1h-1zM238 299h1v1h-1zM239 300h1v1h-1zM239 301h1v1h-1zM240 305h1v1h-1zM241 306h1v1h-1zM241 307h1v1h-1zM243 311h1v1h-1zM244 312h1v1h-1zM244 313h1v1h-1zM246 317h1v1h-1zM247 318h1v1h-1zM247 319h1v1h-1zM250 323h1v1h-1zM250 324h1v1h-1zM251 325h1v1h-1zM254 329h1v1h-1zM254 330h1v1h-1zM255 331h1v1h-1zM258 335h1v1h-1zM259 336h1v1h-1zM260 337h1v1h-1zM264 341h1v1h-1zM265 342h1v1h-1zM266 343h1v1h-1zM270 347h1v1h-1zM271 348h1v1h-1zM272 349h1v1h-1zM276 352h1v1h-1zM277 353h1v1h-1zM278 353h1v1h-1zM282 356h1v1h-1zM283 357h1v1h-1zM284 357h1v1h-1zM288 360h1v1h-1zM289 360h1v1h-1zM290 361h1v1h-1zM294 363h1v1h-1zM295 363h1v1h-1zM296 364h1v1h-1zM300 366h1v1h-1zM301 366h1v1h-1zM302 367h1v1h-1zM306 368h1v1h-1zM307 368h1v1h-1zM308 369h1v1h-1zM312 370h1v1h-1zM313 370h1v1h-1zM314 370h1v1h-1zM318 371h1v1h-1zM319 372h1v1h-1zM320 372h1v1h-1zM324 373h1v1h-1zM325 373h1v1h-1zM326 373h1v1h-1zM330 373h1v1h-1zM331 374h1v1h-1zM332 374h1v1h-1zM336 374h1v1h-1zM337 374h1v1h-1zM338 374h1v1h-1zM342 374h1v1h-1zM343 374h1v1h-1zM344 374h1v1h-1zM348 374h1v1h-1zM349 374h1v1h-1zM350 374h1v1h-1zM354 373h1v1h-1zM355 373h1v1h-1zM356 373h1v1h-1zM360 373h1v1h-1zM361 372h1v1h-1zM362 372h1v1h-1zM366 371h1v1h-1zM367 371h1v1h-1zM368 371h1v1h-1zM372 370h1v1h-1zM373 370h1v1h-1zM374 369h1v1h-1zM378 368h1v1h-1zM379 368h1v1h-1zM380 367h1v1h-1zM384 366h1v1h-1zM385 365h1v1h-1zM386 365h1v1h-1zM390 363h1v1h-1zM391 362h1v1h-1zM392 362h1v1h-1zM396 360h1v1h-1zM397 359h1v1h-1zM398 359h1v1h-1zM402 356h1v1h-1zM403 355h1v1h-1zM404 355h1v1h-1zM408 352h1v1h-1zM409 351h1v1h-1zM410 350h1v1h-1zM414 347h1v1h-1zM415 346h1v1h-1zM416 345h1v1h-1zM420 341h1v1h-1zM421 340h1v1h-1zM422 339h1v1h-1zM426 335h1v1h-1zM427 334h1v1h-1zM427 333h1v1h-1zM430 329h1v1h-1zM431 328h1v1h-1zM432 327h1v1h-1zM434 323h1v1h-1zM435 322h1v1h-1zM436 321h1v1h-1zM438 317h1v1h-1zM438 316h1v1h-1zM439 315h1v1h-1zM441 311h1v1h-1zM441 310h1v1h-1zM442 309h1v1h-1zM444 305h1v1h-1zM444 304h1v1h-1zM444 303h1v1h-1zM446 299h1v1h-1zM446 298h1v1h-1zM446 297h1v1h-1zM447 293h1v1h-1zM448 292h1v1h-1zM448 291h1v1h-1zM449 287h1v1h-1zM449 286h1v1h-1zM449 285h1v1h-1zM450 281h1v1h-1zM450 280h1v1h-1zM450 279h1v1h-1zM451 275h1v1h-1zM451 274h1v1h-1zM451 273h1v1h-1zM451 269h1v1h-1zM451 268h1v1h-1zM451 267h1v1h-1zM424 265h1v1h-1zM424 264h1v1h-1zM424 263h1v1h-1zM424 259h1v1h-1zM424 258h1v1h-1zM424 257h1v1h-1zM423 253h1v1h-1zM423 252h1v1h-1zM423 251h1v1h-1zM422 247h1v1h-1zM422 246h1v1h-1zM422 245h1v1h-1zM421 241h1v1h-1zM420 240h1v1h-1zM420 239h1v1h-1zM419 235h1v1h-1zM418 234h1v1h-1zM418 233h1v1h-1zM416 229h1v1h-1zM416 228h1v1h-1zM415 227h1v1h-1zM413 223h1v1h-1zM412 222h1v1h-1zM412 221h1v1h-1zM409 217h1v1h-1zM408 216h1v1h-1zM407 215h1v1h-1zM404 211h1v1h-1zM403 210h1v1h-1zM402 209h1v1h-1zM398 205h1v1h-1zM397 204h1v1h-1zM396 203h1v1h-1zM392 200h1v1h-1zM391 199h1v1h-1zM390 198h1v1h-1zM386 195h1v1h-1zM385 195h1v1h-1zM384 194h1v1h-1zM380 192h1v1h-1zM379 191h1v1h-1zM378 191h1v1h-1zM374 189h1v1h-1zM373 189h1v1h-1zM372 188h1v1h-1zM368 187h1v1h-1zM367 187h1v1h-1zM366 186h1v1h-1zM362 185h1v1h-1zM361 185h1v1h-1zM360 185h1v1h-1zM356 184h1v1h-1zM355 184h1v1h-1zM354 184h1v1h-1zM350 183h1v1h-1zM349 183h1v1h-1zM348 183h1v1h-1zM344 183h1v1h-1zM343 183h1v1h-1zM342 183h1v1h-1zM338 183h1v1h-1zM337 183h1v1h-1zM336 183h1v1h-1zM332 183h1v1h-1zM331 183h1v1h-1zM330 184h1v1h-1zM326 184h1v1h-1zM325 184h1v1h-1zM324 185h1v1h-1zM320 186h1v1h-1zM319 186h1v1h-1zM318 186h1v1h-1zM314 188h1v1h-1zM313 188h1v1h-1zM312 188h1v1h-1zM308 190h1v1h-1zM307 191h1v1h-1zM306 191h1v1h-1zM302 193h1v1h-1zM301 194h1v1h-1zM300 194h1v1h-1zM296 197h1v1h-1zM295 197h1v1h-1zM294 198h1v1h-1zM290 201h1v1h-1zM289 202h1v1h-1zM288 203h1v1h-1zM284 207h1v1h-1zM283 208h1v1h-1zM282 209h1v1h-1zM278 213h1v1h-1zM277 214h1v1h-1zM277 215h1v1h-1zM274 219h1v1h-1zM273 220h1v1h-1zM272 221h1v1h-1zM270 225h1v1h-1zM270 226h1v1h-1zM269 227h1v1h-1zM267 231h1v1h-1zM267 232h1v1h-1zM266 233h1v1h-1zM265 237h1v1h-1zM264 238h1v1h-1zM264 239h1v1h-1zM263 243h1v1h-1zM262 244h1v1h-1zM262 245h1v1h-1zM261 249h1v1h-1zM261 250h1v1h-1zM261 251h1v1h-1zM260 255h1v1h-1zM260 256h1v1h-1zM260 257h1v1h-1zM260 261h1v1h-1zM260 262h1v1h-1zM260 263h1v1h-1zM260 267h1v1h-1zM260 268h1v1h-1zM260 269h1v1h-1zM260 273h1v1h-1zM260 274h1v1h-1zM260 275h1v1h-1zM261 279h1v1h-1zM261 280h1v1h-1zM261 281h1v1h-1zM262 285h1v1h-1zM262 286h1v1h-1zM263 287h1v1h-1zM264 291h1v1h-1zM264 292h1v1h-1zM265 293h1v1h-1zM266 297h1v1h-1zM267 298h1v1h-1zM267 299h1v1h-1zM269 303h1v1h-1zM270 304h1v1h-1zM270 305h1v1h-1zM272 309h1v1h-1zM273 310h1v1h-1zM274 311h1v1h-1zM277 315h1v1h-1zM277 316h1v1h-1zM278 317h1v1h-1zM282 321h1v1h-1zM283 322h1v1h-1zM284 323h1v1h-1zM288 327h1v1h-1zM289 328h1v1h-1zM290 329h1v1h-1zM294 332h1v1h-1zM295 333h1v1h-1zM296 333h1v1h-1zM300 336h1v1h-1zM301 336h1v1h-1zM302 337h1v1h-1zM306 339h1v1h-1zM307 339h1v1h-1zM308 340h1v1h-1zM312 342h1v1h-1zM313 342h1v1h-1zM314 342h1v1h-1zM318 344h1v1h-1zM319 344h1v1h-1zM320 344h1v1h-1zM324 345h1v1h-1zM325 346h1v1h-1zM326 346h1v1h-1zM330 346h1v1h-1zM331 347h1v1h-1zM332 347h1v1h-1zM336 347h1v1h-1zM337 347h1v1h-1zM338 347h1v1h-1zM342 347h1v1h-1zM343 347h1v1h-1zM344 347h1v1h-1zM348 347h1v1h-1zM349 347h1v1h-1zM350 347h1v1h-1zM354 346h1v1h-1zM355 346h1v1h-1zM356 346h1v1h-1zM360 345h1v1h-1zM361 345h1v1h-1zM362 345h1v1h-1zM366 344h1v1h-1zM367 343h1v1h-1zM368 343h1v1h-1zM372 342h1v1h-1zM373 341h1v1h-1zM374 341h1v1h-1zM378 339h1v1h-1zM379 339h1v1h-1zM380 338h1v1h-1zM384 336h1v1h-1zM385 335h1v1h-1zM386 335h1v1h-1zM390 332h1v1h-1zM391 331h1v1h-1zM392 330h1v1h-1zM396 327h1v1h-1zM397 326h1v1h-1zM398 325h1v1h-1zM402 321h1v1h-1zM403 320h1v1h-1zM404 319h1v1h-1zM407 315h1v1h-1zM408 314h1v1h-1zM409 313h1v1h-1zM412 309h1v1h-1zM412 308h1v1h-1zM413 307h1v1h-1zM415 303h1v1h-1zM416 302h1v1h-1zM416 301h1v1h-1zM418 297h1v1h-1zM418 296h1v1h-1zM419 295h1v1h-1zM420 291h1v1h-1zM420 290h1v1h-1zM421 289h1v1h-1zM422 285h1v1h-1zM422 284h1v1h-1zM422 283h1v1h-1zM423 279h1v1h-1zM423 278h1v1h-1zM423 277h1v1h-1zM424 273h1v1h-1zM424 272h1v1h-1zM424 271h1v1h-1zM424 267h1v1h-1zM424 266h1v1h-1zM403 265h1v1h-1zM403 264h1v1h-1zM403 263h1v1h-1zM403 259h1v1h-1zM403 258h1v1h-1zM403 257h1v1h-1zM402 253h1v1h-1zM402 252h1v1h-1zM402 251h1v1h-1zM400 247h1v1h-1zM400 246h1v1h-1zM400 245h1v1h-1zM398 241h1v1h-1zM398 240h1v1h-1zM397 239h1v1h-1zM395 235h1v1h-1zM395 234h1v1h-1zM394 233h1v1h-1zM391 229h1v1h-1zM391 228h1v1h-1zM390 227h1v1h-1zM386 223h1v1h-1zM385 222h1v1h-1zM384 221h1v1h-1zM380 217h1v1h-1zM379 216h1v1h-1zM378 216h1v1h-1zM374 213h1v1h-1zM373 212h1v1h-1zM372 212h1v1h-1zM368 210h1v1h-1zM367 209h1v1h-1zM366 209h1v1h-1zM362 207h1v1h-1zM361 207h1v1h-1zM360 207h1v1h-1zM356 205h1v1h-1zM355 205h1v1h-1zM354 205h1v1h-1zM350 204h1v1h-1zM349 204h1v1h-1zM348 204h1v1h-1zM344 204h1v1h-1zM343 204h1v1h-1zM342 204h1v1h-1zM338 204h1v1h-1zM337 204h1v1h-1zM336 204h1v1h-1zM332 205h1v1h-1zM331 205h1v1h-1zM330 205h1v1h-1zM326 206h1v1h-1zM325 206h1v1h-1zM324 207h1v1h-1zM320 208h1v1h-1zM319 208h1v1h-1zM318 209h1v1h-1zM314 211h1v1h-1zM313 211h1v1h-1zM312 212h1v1h-1zM308 214h1v1h-1zM307 215h1v1h-1zM306 216h1v1h-1zM302 219h1v1h-1zM301 220h1v1h-1zM300 221h1v1h-1zM296 225h1v1h-1zM295 226h1v1h-1zM294 227h1v1h-1zM291 231h1v1h-1zM291 232h1v1h-1zM290 233h1v1h-1zM288 237h1v1h-1zM287 238h1v1h-1zM287 239h1v1h-1zM285 243h1v1h-1zM285 244h1v1h-1zM284 245h1v1h-1zM283 249h1v1h-1zM283 250h1v1h-1zM282 251h1v1h-1zM282 255h1v1h-1zM282 256h1v1h-1zM281 257h1v1h-1zM281 261h1v1h-1zM281 262h1v1h-1zM281 263h1v1h-1zM281 267h1v1h-1zM281 268h1v1h-1zM281 269h1v1h-1zM281 273h1v1h-1zM282 274h1v1h-1zM282 275h1v1h-1zM282 279h1v1h-1zM283 280h1v1h-1zM283 281h1v1h-1zM284 285h1v1h-1zM285 286h1v1h-1zM285 287h1v1h-1zM287 291h1v1h-1zM287 292h1v1h-1zM288 293h1v1h-1zM290 297h1v1h-1zM291 298h1v1h-1zM291 299h1v1h-1zM294 303h1v1h-1zM295 304h1v1h-1zM296 305h1v1h-1zM300 309h1v1h-1zM301 310h1v1h-1zM302 311h1v1h-1zM306 314h1v1h-1zM307 315h1v1h-1zM308 316h1v1h-1zM312 318h1v1h-1zM313 319h1v1h-1zM314 319h1v1h-1zM318 321h1v1h-1zM319 322h1v1h-1zM320 322h1v1h-1zM324 323h1v1h-1zM325 324h1v1h-1zM326 324h1v1h-1zM330 325h1v1h-1zM331 325h1v1h-1zM332 325h1v1h-1zM336 326h1v1h-1zM337 326h1v1h-1zM338 326h1v1h-1zM342 326h1v1h-1zM343 326h1v1h-1zM344 326h1v1h-1zM348 326h1v1h-1zM349 326h1v1h-1zM350 326h1v1h-1zM354 325h1v1h-1zM355 325h1v1h-1zM356 325h1v1h-1zM360 323h1v1h-1zM361 323h1v1h-1zM362 323h1v1h-1zM366 321h1v1h-1zM367 321h1v1h-1zM368 320h1v1h-1zM372 318h1v1h-1zM373 318h1v1h-1zM374 317h1v1h-1zM378 314h1v1h-1zM379 314h1v1h-1zM380 313h1v1h-1zM384 309h1v1h-1zM385 308h1v1h-1zM386 307h1v1h-1zM390 303h1v1h-1zM391 302h1v1h-1zM391 301h1v1h-1zM394 297h1v1h-1zM395 296h1v1h-1zM395 295h1v1h-1zM397 291h1v1h-1zM398 290h1v1h-1zM398 289h1v1h-1zM400 285h1v1h-1zM400 284h1v1h-1zM400 283h1v1h-1zM402 279h1v1h-1zM402 278h1v1h-1zM402 277h1v1h-1zM403 273h1v1h-1zM403 272h1v1h-1zM403 271h1v1h-1zM403 267h1v1h-1zM403 266h1v1h-1zM376 265h1v1h-1zM376 264h1v1h-1zM376 263h1v1h-1zM376 259h1v1h-1zM375 258h1v1h-1zM375 257h1v1h-1zM374 253h1v1h-1zM374 252h1v1h-1zM373 251h1v1h-1zM371 247h1v1h-1zM370 246h1v1h-1zM370 245h1v1h-1zM366 241h1v1h-1zM365 240h1v1h-1zM364 239h1v1h-1zM360 236h1v1h-1zM359 235h1v1h-1zM358 235h1v1h-1zM354 233h1v1h-1zM353 233h1v1h-1zM352 232h1v1h-1zM348 231h1v1h-1zM347 231h1v1h-1zM346 231h1v1h-1zM342 231h1v1h-1zM341 231h1v1h-1zM340 231h1v1h-1zM336 231h1v1h-1zM335 232h1v1h-1zM334 232h1v1h-1zM330 233h1v1h-1zM329 233h1v1h-1zM328 234h1v1h-1zM324 236h1v1h-1zM323 237h1v1h-1zM322 237h1v1h-1zM318 241h1v1h-1zM317 242h1v1h-1zM316 243h1v1h-1zM313 247h1v1h-1zM312 248h1v1h-1zM312 249h1v1h-1zM310 253h1v1h-1zM310 254h1v1h-1zM309 255h1v1h-1zM308 259h1v1h-1zM308 260h1v1h-1zM308 261h1v1h-1zM308 265h1v1h-1zM308 266h1v1h-1zM308 267h1v1h-1zM308 271h1v1h-1zM309 272h1v1h-1zM309 273h1v1h-1zM310 277h1v1h-1zM310 278h1v1h-1zM311 279h1v1h-1zM313 283h1v1h-1zM314 284h1v1h-1zM314 285h1v1h-1zM318 289h1v1h-1zM319 290h1v1h-1zM320 291h1v1h-1zM324 294h1v1h-1zM325 295h1v1h-1zM326 295h1v1h-1zM330 297h1v1h-1zM331 297h1v1h-1zM332 298h1v1h-1zM336 299h1v1h-1zM337 299h1v1h-1zM338 299h1v1h-1zM342 299h1v1h-1zM343 299h1v1h-1zM344 299h1v1h-1zM348 299h1v1h-1zM349 298h1v1h-1zM350 298h1v1h-1zM354 297h1v1h-1zM355 297h1v1h-1zM356 296h1v1h-1zM360 294h1v1h-1zM361 293h1v1h-1zM362 293h1v1h-1zM366 289h1v1h-1zM367 288h1v1h-1zM368 287h1v1h-1zM371 283h1v1h-1zM372 282h1v1h-1zM372 281h1v1h-1zM374 277h1v1h-1zM374 276h1v1h-1zM375 275h1v1h-1zM376 271h1v1h-1zM376 270h1v1h-1zM376 269h1v1h-1zM361 265h1v1h-1zM361 264h1v1h-1zM361 263h1v1h-1zM360 259h1v1h-1zM360 258h1v1h-1zM359 257h1v1h-1zM357 253h1v1h-1zM356 252h1v1h-1zM355 251h1v1h-1zM351 248h1v1h-1zM350 248h1v1h-1zM349 247h1v1h-1zM345 246h1v1h-1zM344 246h1v1h-1zM343 246h1v1h-1zM339 246h1v1h-1zM338 247h1v1h-1zM337 247h1v1h-1zM333 248h1v1h-1zM332 249h1v1h-1zM331 250h1v1h-1zM327 253h1v1h-1zM327 254h1v1h-1zM326 255h1v1h-1zM324 259h1v1h-1zM324 260h1v1h-1zM324 261h1v1h-1zM323 265h1v1h-1zM323 266h1v1h-1zM323 267h1v1h-1zM324 271h1v1h-1zM324 272h1v1h-1zM325 273h1v1h-1zM327 277h1v1h-1zM328 278h1v1h-1zM329 279h1v1h-1zM333 282h1v1h-1zM334 282h1v1h-1zM335 283h1v1h-1zM339 284h1v1h-1zM340 284h1v1h-1zM341 284h1v1h-1zM345 284h1v1h-1zM346 283h1v1h-1zM347 283h1v1h-1zM351 282h1v1h-1zM352 281h1v1h-1zM353 280h1v1h-1zM357 277h1v1h-1zM357 276h1v1h-1zM358 275h1v1h-1zM360 271h1v1h-1zM360 270h1v1h-1zM360 269h1v1h-1zM353 265h1v1h-1zM353 264h1v1h-1zM352 263h1v1h-1zM351 259h1v1h-1zM350 258h1v1h-1zM349 257h1v1h-1zM345 255h1v1h-1zM344 255h1v1h-1zM343 254h1v1h-1zM339 255h1v1h-1zM338 255h1v1h-1zM337 256h1v1h-1zM333 259h1v1h-1zM333 260h1v1h-1zM332 261h1v1h-1zM331 265h1v1h-1zM331 266h1v1h-1zM332 267h1v1h-1zM333 271h1v1h-1zM334 272h1v1h-1zM335 273h1v1h-1zM339 275h1v1h-1zM340 275h1v1h-1zM341 276h1v1h-1zM345 275h1v1h-1zM346 275h1v1h-1zM347 274h1v1h-1zM351 271h1v1h-1zM351 270h1v1h-1zM352 269h1v1h-1z" fill="#000" stroke="none"/>
<path d="M147.5 265.5H537.5M342.5 70.5V460.5" stroke="#000" stroke-width="1" fill="none"/>
<path d="M204.61 127.61L480.39 403.39M480.39 127.61L204.61 403.39" stroke="#000" stroke-width="0.9" fill="none"/>
<path d="M537.75 248.42L534.27 248.72M535.52 231.46L532.08 232.07M531.82 214.77L528.44 215.68M526.68 198.46L523.39 199.66M520.14 182.67L516.96 184.15M512.24 167.5L509.21 169.25M503.05 153.08L500.19 155.09M492.64 139.51L489.96 141.76M481.09 126.91L478.62 129.38M468.49 115.36L466.24 118.04M454.92 104.95L452.91 107.81M440.5 95.76L438.75 98.79M425.33 87.86L423.85 91.04M409.54 81.32L408.34 84.61M393.23 76.18L392.32 79.56M376.54 72.48L375.93 75.92M359.58 70.25L359.28 73.73M325.42 70.25L325.72 73.73M308.46 72.48L309.07 75.92M291.77 76.18L292.68 79.56M275.46 81.32L276.66 84.61M259.67 87.86L261.15 91.04M244.5 95.76L246.25 98.79M230.08 104.95L232.09 107.81M216.51 115.36L218.76 118.04M203.91 126.91L206.38 129.38M192.36 139.51L195.04 141.76M181.95 153.08L184.81 155.09M172.76 167.5L175.79 169.25M164.86 182.67L168.04 184.15M158.32 198.46L161.61 199.66M153.18 214.77L156.56 215.68M149.48 231.46L152.92 232.07M147.25 248.42L150.73 248.72M147.25 282.58L150.73 282.28M149.48 299.54L152.92 298.93M153.18 316.23L156.56 315.32M158.32 332.54L161.61 331.34M164.86 348.33L168.04 346.85M172.76 363.5L175.79 361.75M181.95 377.92L184.81 375.91M192.36 391.49L195.04 389.24M203.91 404.09L206.38 401.62M216.51 415.64L218.76 412.96M230.08 426.05L232.09 423.19M244.5 435.24L246.25 432.21M259.67 443.14L261.15 439.96M275.46 449.68L276.66 446.39M291.77 454.82L292.68 451.44M308.46 458.52L309.07 455.08M325.42 460.75L325.72 457.27M359.58 460.75L359.28 457.27M376.54 458.52L375.93 455.08M393.23 454.82L392.32 451.44M409.54 449.68L408.34 446.39M425.33 443.14L423.85 439.96M440.5 435.24L438.75 432.21M454.92 426.05L452.91 423.19M468.49 415.64L466.24 412.96M481.09 404.09L478.62 401.62M492.64 391.49L489.96 389.24M503.05 377.92L500.19 375.91M512.24 363.5L509.21 361.75M520.14 348.33L516.96 346.85M526.68 332.54L523.39 331.34M531.82 316.23L528.44 315.32M535.52 299.54L532.08 298.93M537.75 282.58L534.27 282.28" stroke="#000" stroke-width="1" fill="none"/>
<path d="M341 81h1v1h-1zM341 91h1v1h-1zM341 101h1v1h-1zM341 110h1v1h-1zM341 119h1v1h-1zM341 127h1v1h-1zM341 135h1v1h-1zM341 142h1v1h-1zM341 149h1v1h-1zM341 156h1v1h-1zM341 162h1v1h-1zM341 168h1v1h-1zM341 173h1v1h-1zM341 178h1v1h-1zM341 183h1v1h-1zM341 188h1v1h-1zM341 192h1v1h-1zM341 196h1v1h-1zM341 200h1v1h-1zM341 204h1v1h-1zM341 210h1v1h-1zM341 216h1v1h-1zM341 222h1v1h-1zM341 226h1v1h-1zM341 239h1v1h-1zM341 250h1v1h-1zM357 264h1v1h-1zM368 264h1v1h-1zM381 264h1v1h-1zM385 264h1v1h-1zM391 264h1v1h-1zM397 264h1v1h-1zM403 264h1v1h-1zM407 264h1v1h-1zM411 264h1v1h-1zM415 264h1v1h-1zM419 264h1v1h-1zM424 264h1v1h-1zM429 264h1v1h-1zM434 264h1v1h-1zM439 264h1v1h-1zM445 264h1v1h-1zM451 264h1v1h-1zM458 264h1v1h-1zM465 264h1v1h-1zM472 264h1v1h-1zM480 264h1v1h-1zM488 264h1v1h-1zM497 264h1v1h-1zM506 264h1v1h-1zM516 264h1v1h-1zM526 264h1v1h-1zM158 266h1v1h-1zM168 266h1v1h-1zM178 266h1v1h-1zM187 266h1v1h-1zM196 266h1v1h-1zM204 266h1v1h-1zM212 266h1v1h-1zM219 266h1v1h-1zM226 266h1v1h-1zM233 266h1v1h-1zM239 266h1v1h-1zM245 266h1v1h-1zM250 266h1v1h-1zM255 266h1v1h-1zM260 266h1v1h-1zM265 266h1v1h-1zM269 266h1v1h-1zM273 266h1v1h-1zM277 266h1v1h-1zM281 266h1v1h-1zM287 266h1v1h-1zM293 266h1v1h-1zM299 266h1v1h-1zM303 266h1v1h-1zM316 266h1v1h-1zM327 266h1v1h-1zM343 280h1v1h-1zM343 291h1v1h-1zM343 304h1v1h-1zM343 308h1v1h-1zM343 314h1v1h-1zM343 320h1v1h-1zM343 326h1v1h-1zM343 330h1v1h-1zM343 334h1v1h-1zM343 338h1v1h-1zM343 342h1v1h-1zM343 347h1v1h-1zM343 352h1v1h-1zM343 357h1v1h-1zM343 362h1v1h-1zM343 368h1v1h-1zM343 374h1v1h-1zM343 381h1v1h-1zM343 388h1v1h-1zM343 395h1v1h-1zM343 403h1v1h-1zM343 411h1v1h-1zM343 420h1v1h-1zM343 429h1v1h-1zM343 439h1v1h-1zM343 449h1v1h-1z" fill="#000"/>
<path d="M472.58 135.42l-1.41 -1.41M212.42 135.42l-1.41 1.41M212.42 395.58l1.41 1.41M472.58 395.58l1.41 -1.41M465.22 142.78l-1.41 -1.41M219.78 142.78l-1.41 1.41M219.78 388.22l1.41 1.41M465.22 388.22l1.41 -1.41M458.27 149.73l-1.41 -1.41M226.73 149.73l-1.41 1.41M226.73 381.27l1.41 1.41M458.27 381.27l1.41 -1.41M451.72 156.28l-1.41 -1.41M233.28 156.28l-1.41 1.41M233.28 374.72l1.41 1.41M451.72 374.72l1.41 -1.41M445.54 162.46l-1.41 -1.41M239.46 162.46l-1.41 1.41M239.46 368.54l1.41 1.41M445.54 368.54l1.41 -1.41M439.71 168.29l-1.41 -1.41M245.29 168.29l-1.41 1.41M245.29 362.71l1.41 1.41M439.71 362.71l1.41 -1.41M434.2 173.8l-1.41 -1.41M250.8 173.8l-1.41 1.41M250.8 357.2l1.41 1.41M434.2 357.2l1.41 -1.41M429.01 178.99l-1.41 -1.41M255.99 178.99l-1.41 1.41M255.99 352.01l1.41 1.41M429.01 352.01l1.41 -1.41M424.12 183.88l-1.41 -1.41M260.88 183.88l-1.41 1.41M260.88 347.12l1.41 1.41M424.12 347.12l1.41 -1.41M419.5 188.5l-1.41 -1.41M265.5 188.5l-1.41 1.41M265.5 342.5l1.41 1.41M419.5 342.5l1.41 -1.41M415.14 192.86l-1.41 -1.41M269.86 192.86l-1.41 1.41M269.86 338.14l1.41 1.41M415.14 338.14l1.41 -1.41M411.03 196.97l-1.41 -1.41M273.97 196.97l-1.41 1.41M273.97 334.03l1.41 1.41M411.03 334.03l1.41 -1.41M407.15 200.85l-1.41 -1.41M277.85 200.85l-1.41 1.41M277.85 330.15l1.41 1.41M407.15 330.15l1.41 -1.41M403.49 204.51l-1.41 -1.41M281.51 204.51l-1.41 1.41M281.51 326.49l1.41 1.41M403.49 326.49l1.41 -1.41M400.04 207.96l-1.41 -1.41M284.96 207.96l-1.41 1.41M284.96 323.04l1.41 1.41M400.04 323.04l1.41 -1.41M396.78 211.22l-1.41 -1.41M288.22 211.22l-1.41 1.41M288.22 319.78l1.41 1.41M396.78 319.78l1.41 -1.41M393.71 214.29l-1.41 -1.41M291.29 214.29l-1.41 1.41M291.29 316.71l1.41 1.41M393.71 316.71l1.41 -1.41M390.81 217.19l-1.41 -1.41M294.19 217.19l-1.41 1.41M294.19 313.81l1.41 1.41M390.81 313.81l1.41 -1.41M388.07 219.93l-1.41 -1.41M296.93 219.93l-1.41 1.41M296.93 311.07l1.41 1.41M388.07 311.07l1.41 -1.41M385.5 222.5l-1.41 -1.41M299.5 222.5l-1.41 1.41M299.5 308.5l1.41 1.41M385.5 308.5l1.41 -1.41M380.77 227.23l-1.41 -1.41M304.23 227.23l-1.41 1.41M304.23 303.77l1.41 1.41M380.77 303.77l1.41 -1.41M376.56 231.44l-1.41 -1.41M308.44 231.44l-1.41 1.41M308.44 299.56l1.41 1.41M376.56 299.56l1.41 -1.41M372.81 235.19l-1.41 -1.41M312.19 235.19l-1.41 1.41M312.19 295.81l1.41 1.41M372.81 295.81l1.41 -1.41M369.48 238.52l-1.41 -1.41M315.52 238.52l-1.41 1.41M315.52 292.48l1.41 1.41M369.48 292.48l1.41 -1.41M360.44 247.56l-1.41 -1.41M324.56 247.56l-1.41 1.41M324.56 283.44l1.41 1.41M360.44 283.44l1.41 -1.41M352.52 255.48l-1.41 -1.41M332.48 255.48l-1.41 1.41M332.48 275.52l1.41 1.41M352.52 275.52l1.41 -1.41" stroke="#000" stroke-width="0.9" fill="none"/>

<path d="M468 220h9v1h-9zM457 221h11v1h-11zM477 221h7v1h-7zM445 222h12v1h-12zM484 222h5v1h-5zM439 223h6v1h-6zM489 223h4v1h-4zM394 224h4v1h-4zM435 224h4v1h-4zM493 224h3v1h-3zM392 225h2v1h-2zM397 225h1v1h-1zM432 225h3v1h-3zM496 225h3v1h-3zM389 226h3v1h-3zM398 226h1v1h-1zM428 226h4v1h-4zM499 226h3v1h-3zM387 227h2v1h-2zM398 227h1v1h-1zM423 227h5v1h-5zM502 227h4v1h-4zM385 228h2v1h-2zM398 228h1v1h-1zM419 228h4v1h-4zM506 228h3v1h-3zM384 229h1v1h-1zM398 229h1v1h-1zM415 229h4v1h-4zM509 229h2v1h-2zM382 230h2v1h-2zM397 230h1v1h-1zM411 230h4v1h-4zM511 230h2v1h-2zM381 231h1v1h-1zM396 231h1v1h-1zM407 231h4v1h-4zM513 231h1v1h-1zM379 232h2v1h-2zM395 232h1v1h-1zM404 232h3v1h-3zM514 232h2v1h-2zM377 233h2v1h-2zM395 233h1v1h-1zM401 233h3v1h-3zM516 233h2v1h-2zM375 234h2v1h-2zM394 234h1v1h-1zM398 234h3v1h-3zM518 234h2v1h-2zM374 235h1v1h-1zM395 235h3v1h-3zM520 235h1v1h-1zM363 236h3v1h-3zM373 236h1v1h-1zM521 236h1v1h-1zM362 237h2v1h-2zM365 237h1v1h-1zM371 237h2v1h-2zM522 237h2v1h-2zM361 238h1v1h-1zM364 238h1v1h-1zM370 238h1v1h-1zM524 238h1v1h-1zM354 239h3v1h-3zM360 239h1v1h-1zM364 239h1v1h-1zM369 239h1v1h-1zM525 239h1v1h-1zM353 240h1v1h-1zM356 240h1v1h-1zM359 240h1v1h-1zM363 240h1v1h-1zM367 240h2v1h-2zM526 240h1v1h-1zM323 241h1v1h-1zM353 241h1v1h-1zM355 241h1v1h-1zM358 241h1v1h-1zM363 241h1v1h-1zM365 241h2v1h-2zM527 241h1v1h-1zM322 242h1v1h-1zM324 242h2v1h-2zM352 242h1v1h-1zM355 242h1v1h-1zM357 242h1v1h-1zM363 242h2v1h-2zM528 242h1v1h-1zM322 243h1v1h-1zM326 243h1v1h-1zM333 243h2v1h-2zM351 243h1v1h-1zM355 243h1v1h-1zM357 243h1v1h-1zM361 243h3v1h-3zM529 243h1v1h-1zM323 244h1v1h-1zM327 244h1v1h-1zM333 244h3v1h-3zM347 244h2v1h-2zM350 244h1v1h-1zM354 244h1v1h-1zM356 244h1v1h-1zM360 244h1v1h-1zM362 244h1v1h-1zM530 244h1v1h-1zM307 245h10v1h-10zM323 245h1v1h-1zM328 245h1v1h-1zM333 245h1v1h-1zM335 245h1v1h-1zM346 245h3v1h-3zM350 245h1v1h-1zM354 245h1v1h-1zM356 245h1v1h-1zM359 245h1v1h-1zM361 245h1v1h-1zM531 245h1v1h-1zM307 246h1v1h-1zM317 246h3v1h-3zM324 246h1v1h-1zM329 246h1v1h-1zM333 246h1v1h-1zM336 246h1v1h-1zM346 246h1v1h-1zM348 246h2v1h-2zM354 246h2v1h-2zM359 246h2v1h-2zM531 246h1v1h-1zM307 247h1v1h-1zM320 247h2v1h-2zM325 247h1v1h-1zM330 247h1v1h-1zM333 247h1v1h-1zM336 247h1v1h-1zM346 247h1v1h-1zM348 247h2v1h-2zM353 247h2v1h-2zM358 247h2v1h-2zM532 247h1v1h-1zM308 248h1v1h-1zM322 248h1v1h-1zM326 248h1v1h-1zM331 248h1v1h-1zM334 248h1v1h-1zM337 248h1v1h-1zM339 248h2v1h-2zM342 248h2v1h-2zM345 248h1v1h-1zM348 248h2v1h-2zM352 248h2v1h-2zM357 248h2v1h-2zM532 248h1v1h-1zM308 249h1v1h-1zM323 249h1v1h-1zM326 249h1v1h-1zM332 249h1v1h-1zM334 249h1v1h-1zM337 249h1v1h-1zM339 249h2v1h-2zM342 249h4v1h-4zM348 249h1v1h-1zM352 249h1v1h-1zM356 249h2v1h-2zM533 249h1v1h-1zM309 250h1v1h-1zM324 250h2v1h-2zM327 250h1v1h-1zM332 250h1v1h-1zM335 250h1v1h-1zM338 250h5v1h-5zM344 250h1v1h-1zM347 250h2v1h-2zM351 250h2v1h-2zM355 250h1v1h-1zM357 250h1v1h-1zM533 250h1v1h-1zM310 251h1v1h-1zM326 251h2v1h-2zM333 251h1v1h-1zM335 251h1v1h-1zM338 251h2v1h-2zM341 251h2v1h-2zM344 251h1v1h-1zM347 251h2v1h-2zM351 251h1v1h-1zM354 251h1v1h-1zM356 251h1v1h-1zM534 251h1v1h-1zM311 252h1v1h-1zM327 252h2v1h-2zM334 252h2v1h-2zM339 252h1v1h-1zM341 252h2v1h-2zM344 252h1v1h-1zM347 252h1v1h-1zM350 252h1v1h-1zM353 252h1v1h-1zM355 252h1v1h-1zM534 252h1v1h-1zM311 253h1v1h-1zM328 253h2v1h-2zM334 253h1v1h-1zM336 253h1v1h-1zM339 253h1v1h-1zM341 253h2v1h-2zM344 253h1v1h-1zM346 253h2v1h-2zM350 253h1v1h-1zM353 253h2v1h-2zM534 253h1v1h-1zM311 254h1v1h-1zM330 254h1v1h-1zM335 254h2v1h-2zM339 254h1v1h-1zM341 254h2v1h-2zM344 254h1v1h-1zM346 254h1v1h-1zM349 254h1v1h-1zM352 254h2v1h-2zM535 254h1v1h-1zM308 255h4v1h-4zM331 255h1v1h-1zM336 255h2v1h-2zM339 255h4v1h-4zM344 255h1v1h-1zM346 255h1v1h-1zM348 255h1v1h-1zM351 255h2v1h-2zM535 255h1v1h-1zM305 256h3v1h-3zM332 256h1v1h-1zM336 256h2v1h-2zM339 256h5v1h-5zM345 256h1v1h-1zM348 256h1v1h-1zM350 256h2v1h-2zM535 256h1v1h-1zM303 257h2v1h-2zM333 257h1v1h-1zM337 257h2v1h-2zM340 257h4v1h-4zM345 257h1v1h-1zM347 257h1v1h-1zM349 257h2v1h-2zM536 257h1v1h-1zM302 258h1v1h-1zM334 258h2v1h-2zM337 258h2v1h-2zM340 258h1v1h-1zM342 258h3v1h-3zM346 258h1v1h-1zM348 258h2v1h-2zM536 258h1v1h-1zM300 259h2v1h-2zM335 259h2v1h-2zM338 259h3v1h-3zM342 259h3v1h-3zM346 259h1v1h-1zM348 259h1v1h-1zM536 259h1v1h-1zM299 260h1v1h-1zM337 260h1v1h-1zM339 260h1v1h-1zM345 260h1v1h-1zM347 260h1v1h-1zM536 260h1v1h-1zM298 261h1v1h-1zM338 261h1v1h-1zM346 261h1v1h-1zM537 261h1v1h-1zM297 262h1v1h-1zM339 262h1v1h-1zM345 262h1v1h-1zM537 262h1v1h-1zM297 263h1v1h-1zM340 263h1v1h-1zM537 263h1v1h-1zM297 264h1v1h-1zM537 264h1v1h-1zM297 265h1v1h-1zM537 265h1v1h-1zM297 266h1v1h-1zM537 266h1v1h-1zM297 267h1v1h-1zM340 267h1v1h-1zM537 267h1v1h-1zM297 268h1v1h-1zM339 268h1v1h-1zM345 268h1v1h-1zM537 268h1v1h-1zM298 269h1v1h-1zM338 269h1v1h-1zM346 269h1v1h-1zM537 269h1v1h-1zM299 270h1v1h-1zM337 270h1v1h-1zM339 270h1v1h-1zM345 270h1v1h-1zM347 270h1v1h-1zM537 270h1v1h-1zM300 271h1v1h-1zM335 271h2v1h-2zM338 271h3v1h-3zM342 271h3v1h-3zM346 271h1v1h-1zM348 271h1v1h-1zM536 271h1v1h-1zM301 272h2v1h-2zM334 272h2v1h-2zM337 272h2v1h-2zM340 272h1v1h-1zM342 272h3v1h-3zM346 272h1v1h-1zM348 272h2v1h-2zM536 272h1v1h-1zM303 273h2v1h-2zM333 273h2v1h-2zM337 273h2v1h-2zM340 273h4v1h-4zM345 273h1v1h-1zM347 273h1v1h-1zM349 273h2v1h-2zM536 273h1v1h-1zM305 274h3v1h-3zM332 274h1v1h-1zM336 274h2v1h-2zM340 274h6v1h-6zM348 274h1v1h-1zM350 274h2v1h-2zM536 274h1v1h-1zM308 275h4v1h-4zM331 275h1v1h-1zM336 275h1v1h-1zM339 275h1v1h-1zM341 275h4v1h-4zM346 275h1v1h-1zM348 275h1v1h-1zM351 275h2v1h-2zM535 275h1v1h-1zM311 276h1v1h-1zM329 276h2v1h-2zM335 276h2v1h-2zM339 276h1v1h-1zM341 276h2v1h-2zM344 276h1v1h-1zM346 276h1v1h-1zM349 276h1v1h-1zM352 276h2v1h-2zM535 276h1v1h-1zM311 277h1v1h-1zM328 277h2v1h-2zM334 277h1v1h-1zM336 277h1v1h-1zM339 277h1v1h-1zM341 277h2v1h-2zM344 277h1v1h-1zM346 277h2v1h-2zM350 277h1v1h-1zM353 277h2v1h-2zM535 277h1v1h-1zM311 278h1v1h-1zM327 278h2v1h-2zM334 278h2v1h-2zM339 278h1v1h-1zM341 278h2v1h-2zM344 278h1v1h-1zM347 278h1v1h-1zM350 278h1v1h-1zM353 278h2v1h-2zM534 278h1v1h-1zM310 279h1v1h-1zM326 279h2v1h-2zM333 279h1v1h-1zM335 279h1v1h-1zM338 279h2v1h-2zM341 279h2v1h-2zM344 279h1v1h-1zM347 279h2v1h-2zM351 279h1v1h-1zM354 279h2v1h-2zM534 279h1v1h-1zM309 280h1v1h-1zM324 280h3v1h-3zM332 280h1v1h-1zM334 280h1v1h-1zM338 280h5v1h-5zM344 280h2v1h-2zM347 280h2v1h-2zM351 280h2v1h-2zM355 280h2v1h-2zM533 280h1v1h-1zM308 281h1v1h-1zM323 281h1v1h-1zM326 281h1v1h-1zM332 281h1v1h-1zM334 281h1v1h-1zM338 281h3v1h-3zM342 281h4v1h-4zM347 281h2v1h-2zM352 281h1v1h-1zM356 281h2v1h-2zM533 281h1v1h-1zM308 282h1v1h-1zM321 282h2v1h-2zM325 282h1v1h-1zM331 282h1v1h-1zM334 282h1v1h-1zM337 282h1v1h-1zM339 282h2v1h-2zM342 282h2v1h-2zM345 282h1v1h-1zM348 282h2v1h-2zM352 282h2v1h-2zM357 282h2v1h-2zM533 282h1v1h-1zM307 283h1v1h-1zM319 283h2v1h-2zM325 283h1v1h-1zM330 283h1v1h-1zM333 283h1v1h-1zM336 283h1v1h-1zM346 283h1v1h-1zM348 283h2v1h-2zM353 283h2v1h-2zM358 283h2v1h-2zM532 283h1v1h-1zM307 284h1v1h-1zM316 284h3v1h-3zM324 284h1v1h-1zM329 284h1v1h-1zM333 284h1v1h-1zM336 284h1v1h-1zM346 284h1v1h-1zM348 284h1v1h-1zM350 284h1v1h-1zM354 284h2v1h-2zM359 284h2v1h-2zM532 284h1v1h-1zM307 285h9v1h-9zM323 285h1v1h-1zM328 285h1v1h-1zM333 285h1v1h-1zM335 285h1v1h-1zM346 285h3v1h-3zM350 285h1v1h-1zM354 285h1v1h-1zM356 285h1v1h-1zM359 285h1v1h-1zM361 285h1v1h-1zM531 285h1v1h-1zM323 286h1v1h-1zM327 286h1v1h-1zM333 286h3v1h-3zM347 286h2v1h-2zM351 286h1v1h-1zM354 286h1v1h-1zM356 286h1v1h-1zM360 286h3v1h-3zM531 286h1v1h-1zM322 287h1v1h-1zM326 287h1v1h-1zM333 287h2v1h-2zM351 287h1v1h-1zM355 287h1v1h-1zM357 287h1v1h-1zM362 287h2v1h-2zM530 287h1v1h-1zM322 288h1v1h-1zM324 288h2v1h-2zM352 288h1v1h-1zM355 288h1v1h-1zM357 288h1v1h-1zM362 288h1v1h-1zM364 288h1v1h-1zM529 288h1v1h-1zM323 289h1v1h-1zM353 289h1v1h-1zM355 289h1v1h-1zM358 289h1v1h-1zM363 289h1v1h-1zM365 289h2v1h-2zM528 289h1v1h-1zM353 290h1v1h-1zM356 290h1v1h-1zM359 290h1v1h-1zM363 290h1v1h-1zM367 290h2v1h-2zM527 290h1v1h-1zM354 291h3v1h-3zM360 291h1v1h-1zM364 291h1v1h-1zM369 291h1v1h-1zM526 291h1v1h-1zM361 292h1v1h-1zM364 292h1v1h-1zM370 292h1v1h-1zM524 292h2v1h-2zM362 293h2v1h-2zM365 293h1v1h-1zM371 293h1v1h-1zM523 293h1v1h-1zM363 294h3v1h-3zM372 294h2v1h-2zM521 294h2v1h-2zM374 295h1v1h-1zM520 295h1v1h-1zM375 296h1v1h-1zM394 296h7v1h-7zM518 296h2v1h-2zM376 297h2v1h-2zM394 297h1v1h-1zM401 297h3v1h-3zM516 297h2v1h-2zM378 298h2v1h-2zM395 298h1v1h-1zM404 298h3v1h-3zM514 298h2v1h-2zM380 299h2v1h-2zM396 299h1v1h-1zM407 299h3v1h-3zM512 299h2v1h-2zM382 300h1v1h-1zM397 300h1v1h-1zM410 300h4v1h-4zM510 300h2v1h-2zM383 301h2v1h-2zM397 301h1v1h-1zM414 301h5v1h-5zM508 301h2v1h-2zM385 302h2v1h-2zM398 302h1v1h-1zM419 302h4v1h-4zM506 302h2v1h-2zM387 303h2v1h-2zM398 303h1v1h-1zM423 303h4v1h-4zM502 303h4v1h-4zM389 304h2v1h-2zM398 304h1v1h-1zM427 304h4v1h-4zM499 304h3v1h-3zM391 305h2v1h-2zM398 305h1v1h-1zM431 305h4v1h-4zM496 305h3v1h-3zM393 306h5v1h-5zM435 306h4v1h-4zM493 306h3v1h-3zM439 307h4v1h-4zM489 307h4v1h-4zM443 308h4v1h-4zM484 308h5v1h-5zM447 309h21v1h-21zM477 309h7v1h-7zM468 310h9v1h-9z" fill="#000"/>
<path d="M342.5 265.5L498.98 226.78M342.5 265.5L498.98 304.22" stroke="#B23CB2" stroke-width="1.2" fill="none"/>
<path d="M342.5 265.5L398.15 225.80" stroke="#4CC6D6" stroke-width="1.1" fill="none"/>
<path d="M342.5 265.5H537.5" stroke="#3EC23E" stroke-width="1.6" fill="none"/>
<g font-family="Liberation Sans" font-size="14" fill="#000" stroke="#000" stroke-width="0.2">
<rect x="322.2" y="59.9" width="37.0" height="17" fill="#fff" stroke="none"/>
<text x="327.7" y="73.4">0 dB</text>
<rect x="330.3" y="109.0" width="21.0" height="17" fill="#fff" stroke="none"/>
<text x="335.8" y="122.5">-5</text>
<rect x="326.2" y="146.1" width="28.0" height="17" fill="#fff" stroke="none"/>
<text x="331.7" y="159.6">-10</text>
<rect x="325.8" y="173.8" width="28.0" height="17" fill="#fff" stroke="none"/>
<text x="331.3" y="187.3">-15</text>
<rect x="325.8" y="194.6" width="28.0" height="17" fill="#fff" stroke="none"/>
<text x="331.3" y="208.1">-20</text>
<rect x="325.8" y="221.5" width="28.0" height="17" fill="#fff" stroke="none"/>
<text x="331.3" y="235.0">-30</text>
</g>
<circle cx="537.5" cy="265.5" r="2.7" fill="#3EC23E" stroke="#555" stroke-width="1" shape-rendering="geometricPrecision"/>
</svg>
</body></html>
